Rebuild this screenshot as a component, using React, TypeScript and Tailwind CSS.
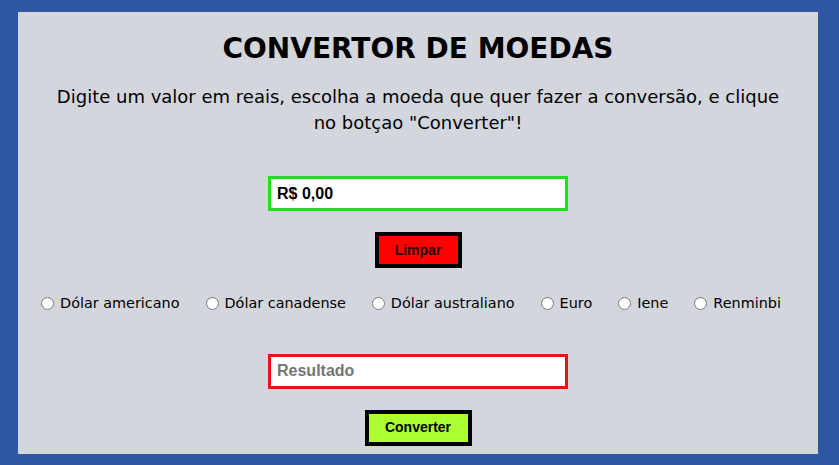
import { useState } from "react";

const moedas = [
  "Dólar americano",
  "Dólar canadense",
  "Dólar australiano",
  "Euro",
  "Iene",
  "Renminbi",
];

export default function App() {
  const [valor, setValor] = useState("R$ 0,00");
  const [moeda, setMoeda] = useState("");

  return (
    <div className="min-h-[465px] bg-[#2f56a3] pl-[18px] pt-[12px]">
      <main className="flex h-[442px] w-[800px] flex-col items-center bg-[#d3d6dd] font-['Comic_Sans_MS','DejaVu_Sans',sans-serif] text-black">
        <h1 className="mt-[15px] text-[28px] font-bold leading-[44px]">CONVERTOR DE MOEDAS</h1>

        <p className="mt-[13px] text-center text-[18px] leading-[26px]">
          Digite um valor em reais, escolha a moeda que quer fazer a conversão, e clique
          <br />
          no botçao "Converter"!
        </p>

        <input
          type="text"
          value={valor}
          onChange={(e) => setValor(e.target.value)}
          className="mt-[40px] h-[35px] w-[300px] border-[3px] border-[#22dd22] bg-white px-[6px] font-['Liberation_Sans',Arial,sans-serif] text-[16px] font-bold outline-none"
        />

        <button
          type="button"
          onClick={() => setValor("R$ 0,00")}
          className="mt-[21px] h-[36px] w-[87px] border-[4px] border-black bg-[#ff0000] font-['Liberation_Sans',Arial,sans-serif] text-[14px] font-bold text-[#2a0000]"
        >
          Limpar
        </button>

        <div className="mt-[25px] mr-[14px] flex items-center gap-[26px] text-[14.4px]">
          {moedas.map((m) => (
            <label key={m} className="flex items-center gap-[6px]">
              <input
                type="radio"
                name="moeda"
                checked={moeda === m}
                onChange={() => setMoeda(m)}
                className="m-0 h-[13px] w-[13px]"
              />
              {m}
            </label>
          ))}
        </div>

        <input
          type="text"
          placeholder="Resultado"
          readOnly
          className="mt-[39px] h-[35px] w-[300px] border-[3px] border-[#ee1111] bg-white px-[6px] font-['Liberation_Sans',Arial,sans-serif] text-[16px] font-bold outline-none placeholder:text-[#757575]"
        />

        <button
          type="button"
          className="mt-[21px] h-[36px] w-[107px] border-[4px] border-black bg-[#adff2f] font-['Liberation_Sans',Arial,sans-serif] text-[14px] font-bold"
        >
          Converter
        </button>
      </main>
    </div>
  );
}
